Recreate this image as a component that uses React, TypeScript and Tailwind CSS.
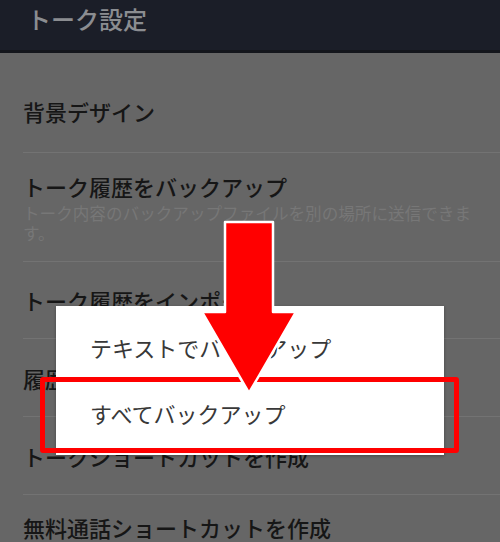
const font = { fontFamily: '"Noto Sans CJK JP", "Noto Sans", sans-serif' };

const rows = [
  { title: '背景デザイン', h: 'h-[99px] pt-[16px]' },
  { title: 'トーク履歴をバックアップ', sub: 'トーク内容のバックアップファイルを別の場所に送信できます。', h: 'h-[109px]' },
  { title: 'トーク履歴をインポート', h: 'h-[77px]' },
  { title: '履歴をすべて削除', h: 'h-[78px]' },
  { title: 'トークショートカットを作成', h: 'h-[78px]' },
  { title: '無料通話ショートカットを作成', h: 'h-[78px] pb-[14px]' },
];

export default function App() {
  return (
    <div className="relative h-[542px] w-[500px] overflow-hidden bg-[#666666]" style={font}>
      <header className="flex h-[53px] items-center border-b-[3px] border-[#14161c] bg-[#1b1e28] pb-[12px] pl-[27px]">
        <h1 className="text-[24px] font-medium leading-none text-[#8b8d91]">トーク設定</h1>
      </header>

      <ul className="pl-[23px]">
        {rows.map((row, i) => (
          <li key={row.title} className={`${row.h} ${i > 0 ? 'border-t border-[#737373]' : ''} ${row.sub ? 'pt-[20px]' : 'flex items-center'} pr-[22px]`}>
            <div>
              <p className="text-[22px] font-medium leading-[26px] text-[#161616]">{row.title}</p>
              {row.sub && <p className="mt-[4px] text-[16.6px] leading-[20px] text-[#777777]">{row.sub}</p>}
            </div>
          </li>
        ))}
      </ul>

      {/* dialog */}
      <div className="absolute left-[56px] top-[306px] h-[149px] w-[388px] bg-white py-[8px] shadow-[0_1px_3px_rgba(0,0,0,0.3)]">
        <div className="flex h-[66px] items-center pl-[34px] text-[22px] text-[#383838]">テキストでバックアップ</div>
        <div className="flex h-[66px] items-center pl-[34px] text-[22px] text-[#383838]">すべてバックアップ</div>
      </div>

      {/* annotation box */}
      <div className="absolute left-[40px] top-[377px] h-[76px] w-[419px] rounded-[3px] border-[5px] border-[#ff0000]" />

      {/* annotation arrow */}
      <svg className="absolute left-0 top-0" width="500" height="542" viewBox="0 0 500 542">
        <polygon
          points="225,222 273,222 273,312 296,312 249,393 202,312 225,312"
          fill="#ff0000"
          stroke="#ffffff"
          strokeWidth="2.5"
          strokeLinejoin="round"
        />
      </svg>
    </div>
  );
}
